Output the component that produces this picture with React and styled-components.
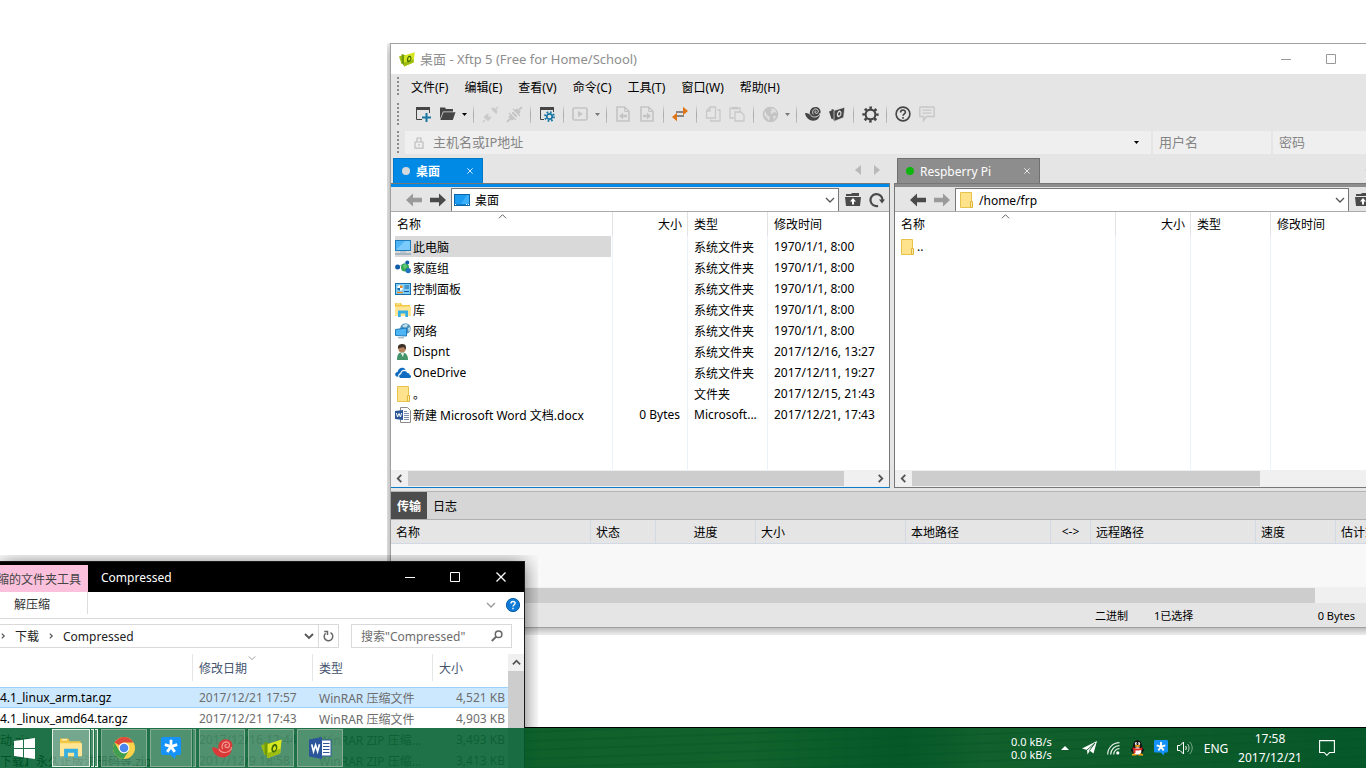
import React from 'react';
import styled, { createGlobalStyle } from 'styled-components';

const GlobalStyle = createGlobalStyle`
  * {
    box-sizing: border-box;
  }
  body {
    margin: 0;
    font-family: "Noto Sans", "Noto Sans CJK SC", sans-serif;
    font-size: 12px;
    color: #000;
  }
  button, input {
    font: inherit;
    color: inherit;
    border: none;
    background: none;
    padding: 0;
    margin: 0;
    outline: none;
    border-radius: 0;
  }
  svg {
    display: block;
    flex: none;
  }
`

/* ---------- desktop ---------- */

const Desktop = styled.main`
  position: relative;
  height: 100vh;
  overflow: hidden;
  background: #fff;
  display: flex;
  flex-direction: column;
  justify-content: flex-end;
`

const Wallpaper = styled.div`
  height: 41px;
  border-top: 1px solid #000;
  background:
    repeating-linear-gradient(178deg, transparent 0 3px, rgba(0, 0, 0, 0.3) 4px 5px, transparent 6px 9px),
    linear-gradient(90deg, #5a4a00, #8a7a20 55%, #302800 66%, #90702a 72%, #704a10 85%, #302010);
`

const XftpWindow = styled.section`
  position: absolute;
  top: 43px;
  left: 390px;
  right: -35px;
  border: 1px solid #a0a0a0;
  background: #e5e5e5;
  box-shadow: 0 1px 12px rgba(0, 0, 0, 0.45);
  clip-path: inset(0 0 -7px -3px);
`

const ExplorerWindow = styled.section`
  position: absolute;
  top: 561px;
  left: 0;
  width: 525px;
  border: 1px solid #1a1a1a;
  border-left: none;
  background: #fff;
  box-shadow: 0 2px 18px rgba(0, 0, 0, 0.55);
  clip-path: inset(-6px -13px 0 0);
`

/* ---------- xftp chrome ---------- */

const TitleBar = styled.header`
  display: flex;
  align-items: center;
  height: 30px;
  padding-left: 8px;
  background: #fff;
  color: #8e8e8e;
`

const Title = styled.h1`
  flex: 1;
  margin: 0;
  padding-left: 5px;
  font-size: 13px;
  line-height: 16px;
  font-weight: 400;
`

const CaptionButton = styled.button`
  display: flex;
  align-items: center;
  justify-content: center;
  width: ${props => props.$wide ? '47px' : '45px'};
  height: 30px;
`

const BarRow = styled.div`
  display: flex;
  align-items: center;
  height: ${props => props.$height}px;
  padding-left: 6px;
`

const Grip = styled.span`
  width: 2px;
  height: ${props => props.$tall ? '23px' : '20px'};
  margin-right: ${props => props.$gap}px;
  background: repeating-linear-gradient(#8c8c8c 0 2px, transparent 2px 4px);
`

const Menu = styled.nav`
  display: flex;
  gap: 16px;
`

const ToolButton = styled.button`
  display: flex;
  align-items: center;
  justify-content: center;
  width: ${props => props.$caret ? '10px' : '24px'};
  height: 24px;
`

const ToolSeparator = styled.span`
  width: 1px;
  height: 18px;
  margin: 0 4px;
  background: linear-gradient(#e0e0e0, #a8a8a8 50%, #c0c0c0);
`

const AddressRow = styled(BarRow)`
  margin-top: 3px;
`

const Field = styled.label`
  display: flex;
  align-items: center;
  height: 23px;
  flex: ${props => props.$grow ? '1' : `0 0 ${props.$width}px`};
  min-width: 0;
  margin-right: 2px;
  padding-left: ${props => props.$grow ? '9px' : '6px'};
  padding-right: ${props => props.$grow ? '3px' : '0'};
  gap: 9px;
  background: #efefef;
  input {
    flex: 1;
    min-width: 0;
    font-size: 13px;
    line-height: 18px;
    padding-bottom: 2px;
  }
  input::placeholder {
    color: #858585;
    opacity: 1;
  }
`

/* ---------- file panes ---------- */

const Panes = styled.div`
  display: flex;
  gap: 4px;
`

const Pane = styled.section`
  flex: ${props => props.$grow} 1 0;
  min-width: 0;
`

const TabRow = styled.div`
  display: flex;
  align-items: flex-end;
  justify-content: space-between;
  height: 29px;
  padding-left: ${props => props.$active ? '2px' : '3px'};
`

const Tab = styled.button`
  display: flex;
  align-items: center;
  width: ${props => props.$width}px;
  height: 25px;
  padding: 0 9px 0 8px;
  gap: 6px;
  color: #fff;
  font-weight: ${props => props.$active ? 700 : 400};
  border: 1px solid ${props => props.$active ? '#0478c4' : '#707070'};
  border-bottom: none;
  background: ${props => props.$active ? '#008ae6' : '#8d8d8d'};
  svg:last-child {
    margin-left: auto;
  }
`

const Dot = styled.span`
  width: 8px;
  height: 8px;
  border-radius: 50%;
  background: ${props => props.$color};
`

const TabArrows = styled.span`
  display: flex;
  gap: 13px;
  padding: 0 10px 8px 0;
`

const PaneBody = styled.div`
  border: 1px solid #777;
  border-left-color: ${props => props.$active ? '#e5e5e5' : '#777'};
  border-left-width: ${props => props.$active ? '0' : '1px'};
  border-bottom-color: ${props => props.$active ? '#0b7bc8' : '#777'};
  background: #fff;
`

const Band = styled.div`
  height: 3px;
  background: ${props => props.$active ? '#008ae6' : '#8d8d8d'};
`

const PathBar = styled.div`
  display: flex;
  align-items: flex-end;
  height: 25px;
  background: #e5e5e5;
  border-bottom: 1px solid #aaa;
`

const PathButton = styled.button`
  display: flex;
  align-items: center;
  justify-content: center;
  width: 24px;
  height: 23px;
`

const PathNav = styled.div`
  display: flex;
  padding-left: 11px;
  width: 60px;
`

const PathBox = styled.label`
  flex: 1;
  display: flex;
  align-items: center;
  min-width: 0;
  height: 23px;
  padding: 0 3px 0 2px;
  gap: 5px;
  border: 1px solid #777;
  border-bottom: none;
  background: #fff;
  input {
    flex: 1;
    min-width: 0;
  }
`

const PathActions = styled.div`
  display: flex;
  padding-left: 2px;
`

const ListBox = styled.div`
  height: 258px;
`

const FileTable = styled.table`
  width: 100%;
  height: 100%;
  table-layout: fixed;
  border-collapse: separate;
  border-spacing: 0;
  th, td {
    padding: 0 6px;
    font-weight: 400;
    text-align: left;
    white-space: nowrap;
    overflow: hidden;
    border-right: 1px solid #ebf2fb;
  }
  th {
    height: 24px;
    border-right-color: #e2e2e2;
  }
  td {
    height: 21px;
  }
  th:last-child, td:last-child {
    border-right: none;
  }
  th:nth-child(2) {
    text-align: right;
    padding-right: 5px;
  }
  td:nth-child(2) {
    text-align: right;
    padding-right: 7px;
  }
  td:first-child {
    padding: 0 1px 0 4px;
  }
`

const NameHead = styled.div`
  display: flex;
  align-items: center;
  justify-content: space-between;
  height: 24px;
  svg {
    align-self: flex-start;
    margin-right: 99px;
  }
`

const FileName = styled.div`
  display: flex;
  align-items: center;
  height: 21px;
  gap: 2px;
  background: ${props => props.$selected ? '#d9d9d9' : 'transparent'};
`

const FillRow = styled.tr`
  td {
    height: auto;
  }
`

const Scroll = styled.div`
  display: flex;
  align-items: center;
  height: ${props => props.$height || 17}px;
  background: #f0f0f0;
`

const ScrollButton = styled.button`
  display: flex;
  align-items: center;
  justify-content: center;
  width: 17px;
  height: 17px;
`

const ScrollTrack = styled.div`
  flex: 1;
`

const ScrollThumb = styled.div`
  width: ${props => props.$size}%;
  height: 15px;
  background: #cdcdcd;
`

/* ---------- transfer panel ---------- */

const Transfers = styled.section`
  margin-top: 3px;
  border-top: 1px solid #b4b4b4;
`

const TransferTabs = styled.div`
  display: flex;
  height: 28px;
  background: #d6d6d6;
  border-bottom: 1px solid #b0b0b0;
`

const TransferTab = styled.button`
  padding: 0 6px;
  color: ${props => props.$active ? '#fff' : '#000'};
  background: ${props => props.$active ? '#4d4d4d' : 'transparent'};
  font-weight: ${props => props.$active ? 700 : 400};
`

const TransferTable = styled.table`
  width: 100%;
  table-layout: fixed;
  border-spacing: 0;
  th {
    height: 24px;
    padding: 0 5px;
    font-weight: 400;
    text-align: left;
    white-space: nowrap;
    overflow: hidden;
    border-right: 1px solid #d2d8e4;
    border-bottom: 1px solid #d2d8e4;
  }
  th:nth-child(3), th:nth-child(6) {
    text-align: center;
  }
`

const TransferBody = styled.div`
  height: 43px;
  background: #f8f8f8;
`

const StatusBar = styled.footer`
  display: flex;
  align-items: center;
  justify-content: flex-end;
  height: 24px;
  padding-right: 45px;
  font-size: 11px;
`

const StatusItem = styled.span`
  width: ${props => props.$width}px;
  text-align: ${props => props.$end ? 'right' : 'left'};
`

/* ---------- explorer ---------- */

const ExplorerTitle = styled.header`
  display: flex;
  align-items: center;
  height: 30px;
  background: #000;
  color: #fff;
`

const ToolsTab = styled.span`
  display: flex;
  justify-content: flex-end;
  align-items: center;
  align-self: flex-end;
  width: 88px;
  height: 27px;
  padding-right: 7px;
  overflow: hidden;
  white-space: nowrap;
  color: #444;
  background: #fbc1dc;
`

const ExplorerName = styled.h2`
  flex: 1;
  margin: 0;
  padding-left: 13px;
  font-size: 12px;
  font-weight: 400;
`

const Ribbon = styled.div`
  display: flex;
  align-items: center;
  justify-content: space-between;
  height: 27px;
  padding-right: 4px;
  border-bottom: 1px solid #d9dadb;
`

const RibbonTab = styled.button`
  align-self: flex-start;
  width: 88px;
  height: 22px;
  padding: 4px 0 0 14px;
  text-align: left;
  line-height: 16px;
  color: #333;
  border-right: 1px solid #dcdcdc;
`

const RibbonTools = styled.div`
  display: flex;
  align-items: center;
  gap: 10px;
`

const Location = styled.div`
  display: flex;
  padding: 5px 12px 6px 0;
  gap: 12px;
`

const Crumbs = styled.div`
  flex: 1;
  display: flex;
  align-items: center;
  height: 24px;
  border: 1px solid #d9d9d9;
  border-left: none;
  gap: 9px;
  color: #222;
`

const CrumbSpacer = styled.span`
  flex: 1;
`

const Refresh = styled.button`
  display: flex;
  align-items: center;
  justify-content: center;
  width: 20px;
  height: 22px;
  border-left: 1px solid #d9d9d9;
  margin-left: -5px;
`

const Search = styled.label`
  display: flex;
  align-items: center;
  width: 161px;
  height: 24px;
  padding: 0 8px 0 9px;
  border: 1px solid #d9d9d9;
  input {
    flex: 1;
    min-width: 0;
  }
  input::placeholder {
    color: #6d6d6d;
    opacity: 1;
  }
`

const ExplorerList = styled.div`
  display: flex;
  height: 118px;
`

const ExplorerTable = styled.table`
  flex: 1;
  table-layout: fixed;
  border-spacing: 0;
  align-self: flex-start;
  width: 0;
  color: #6d6d6d;
  th {
    height: 27px;
    padding: 0 6px;
    font-weight: 400;
    text-align: left;
    color: #44546f;
    border-right: 1px solid #e5e5e5;
  }
  th:last-child {
    border-right: none;
  }
  thead::after {
    content: "";
    display: block;
    height: 6px;
  }
  td {
    height: 21px;
    padding: 0 6px;
    white-space: nowrap;
    overflow: hidden;
  }
  td:first-child {
    padding-left: 0;
    color: #000;
  }
  td:last-child {
    text-align: right;
    padding: 0 3px 0 0;
  }
`

const ExplorerRow = styled.tr`
  td {
    background: ${props => props.$selected ? '#cce8ff' : 'transparent'};
    border: 0 solid #99d1ff;
    border-width: ${props => props.$selected ? '1px 0' : '0'};
  }
`

const SortHead = styled.div`
  display: flex;
  align-items: center;
  height: 27px;
  gap: 1px;
  svg {
    align-self: flex-start;
  }
`

const VerticalScroll = styled.div`
  display: flex;
  flex-direction: column;
  width: 16px;
  background: #f0f0f0;
`

const VerticalThumb = styled.div`
  flex: 1;
  background: #cdcdcd;
`

/* ---------- taskbar ---------- */

const Taskbar = styled.footer`
  position: absolute;
  left: 0;
  right: 0;
  bottom: 0;
  height: 40px;
  display: flex;
  justify-content: space-between;
  color: #fff;
  background: rgba(0, 95, 45, 0.88);
`

const Apps = styled.div`
  display: flex;
  align-items: center;
  gap: 3px;
`

const StartButton = styled.button`
  display: flex;
  align-items: center;
  justify-content: center;
  width: 49px;
  height: 40px;
`

const AppGroup = styled.div`
  display: flex;
  gap: 1px;
`

const AppButton = styled.button`
  display: flex;
  align-items: center;
  justify-content: center;
  width: ${props => 46 - (props.$stack || 0) * 4}px;
  height: 38px;
  border: 1px solid ${props => props.$active ? '#e4efe8' : '#86ad98'};
  background: rgba(255, 255, 255, ${props => props.$active ? 0.38 : 0.22});
`

const StackEdge = styled.span`
  width: 3px;
  height: 38px;
  border: 1px solid ${props => props.$active ? '#e4efe8' : '#86ad98'};
  border-left: none;
  background: rgba(255, 255, 255, 0.2);
`

const Tray = styled.div`
  display: flex;
  align-items: center;
  padding-right: 27px;
`

const TrayButton = styled.button`
  display: flex;
  align-items: center;
  justify-content: center;
  width: 24px;
  height: 40px;
`

const NetSpeed = styled.div`
  width: 42px;
  font-size: 11px;
  line-height: 13px;
  white-space: nowrap;
`

const Language = styled.button`
  margin-left: 5px;
  width: 28px;
`

const Clock = styled.time`
  width: 80px;
  text-align: center;
  line-height: 19px;
  margin-right: 5px;
`

/* ---------- icons ---------- */

const XftpLogo = ({ size = 16, mono }) => {
  const c = mono ? ['#454545', '#454545', '#454545', '#e5e5e5'] : ['#d6e620', '#9cbc10', '#6f9a0a', '#3f6a08'];
  return (
    <svg width={size} height={size} viewBox="0 0 16 16">
      <path d="M0 5.5 L3 4.5 L3.4 13 L2.6 13 Z" fill={c[1]} />
      <path d="M2.6 3 L6.4 4.2 L5.5 15.2 L2.8 12 Z" fill={c[2]} />
      <path d="M5 4.5 L15.8 1.2 L14.6 11.6 L5 15.4 Z" fill={c[0]} stroke={mono ? c[3] : 'none'} strokeWidth=".7" />
      {!mono && <path d="M5 11.5 L14.9 8.2 L14.6 11.6 L5 15.4 Z" fill={c[1]} />}
      <path d="M10.6 4.4 C7.4 5.4 7 10.6 9.5 11.2 C12.7 10.6 13.7 5 10.6 4.4 Z" fill={c[3]} />
      <path d="M10.5 6 C8.9 6.8 8.7 9.3 9.8 9.8 C11.5 9.3 12.1 6.4 10.5 6 Z" fill={c[0]} />
    </svg>
  );
}

const Snail = ({ size = 16, color = '#454545', light = '#e5e5e5' }) => (
  <svg width={size} height={size} viewBox="0 0 16 16">
    <path d="M0 7.6 C1.5 6.2 3.4 8.2 5 8.4 C4.2 4.2 6.6 .9 10.4 .9 C13.6 .9 15.6 3 15.6 5.8 C15.6 7 15.2 7.8 14.8 8.6 C14.8 12.2 12 14.8 8.4 14.8 C4.2 14.8 1 11.8 0 7.6 Z" fill={color} />
    <path d="M5.2 8.4 C6.4 11.2 10.4 11.8 13 10 C14.2 9.2 14.8 8.2 14.9 7" stroke={light} strokeWidth=".9" fill="none" />
    <path d="M8.2 8.4 C6.8 5.8 8.2 3 10.6 2.9 C12.9 2.9 13.9 4.8 13.1 6.4 C12.3 7.9 9.9 7.6 9.8 6 C9.8 5 10.9 4.6 11.4 5.4" stroke={light} strokeWidth=".9" fill="none" />
  </svg>
)

const Caret = ({ color = '#000' }) => (
  <svg width="5" height="3" viewBox="0 0 5 3"><path d="M0 0H5L2.5 3Z" fill={color} /></svg>
)

const Chevron = ({ dir = 'down', color = '#555', size = 10, weight = 1.3 }) => {
  const turn = { down: 0, up: 180, left: 90, right: -90 };
  return (
    <svg width={size} height={size} viewBox="0 0 10 10">
      <path d="M1 3L5 7L9 3" fill="none" stroke={color} strokeWidth={weight} transform={`rotate(${turn[dir]} 5 5)`} />
    </svg>
  );
}

const Cross = ({ size = 6, color = '#fff' }) => (
  <svg width={size} height={size} viewBox="0 0 10 10"><path d="M.5 .5L9.5 9.5M9.5 .5L.5 9.5" stroke={color} strokeWidth="1.3" /></svg>
)

const Minimize = ({ color }) => (
  <svg width="10" height="10" viewBox="0 0 10 10"><path d="M0 5.5H10" stroke={color} /></svg>
)

const Maximize = ({ color }) => (
  <svg width="10" height="10" viewBox="0 0 10 10"><path d="M.5 .5H9.5V9.5H.5Z" fill="none" stroke={color} /></svg>
)

const NewSession = () => (
  <svg width="16" height="16" viewBox="0 0 16 16">
    <path d="M1.5 1V13.5H7M14.5 1V7" stroke="#454545" fill="none" />
    <path d="M1 1H15V4H1Z" fill="#454545" />
    <path d="M7 11.5H16M11.5 7V16" stroke="#1976a3" strokeWidth="2" />
  </svg>
)

const SessionSettings = () => (
  <svg width="16" height="16" viewBox="0 0 16 16">
    <path d="M1.5 1V13.5H5M14.5 1V6" stroke="#454545" fill="none" />
    <path d="M1 1H15V4H1Z" fill="#454545" />
    <circle cx="10.5" cy="10.5" r="4.4" fill="none" stroke="#1976a3" strokeWidth="2" strokeDasharray="1.7 1.75" />
    <circle cx="10.5" cy="10.5" r="2.7" fill="none" stroke="#1976a3" strokeWidth="1.7" />
  </svg>
)

const OpenFolder = () => (
  <svg width="17" height="16" viewBox="0 0 17 16">
    <path d="M1 1.5H6L7 3H14V5.5H4L1 13Z" fill="#454545" />
    <path d="M4.5 6.3H16.5L13.8 14H1.3Z" fill="#454545" />
  </svg>
)

const Plug = ({ joined }) => (
  <svg width="17" height="17" viewBox="0 0 17 17">
    {joined
      ? <g stroke="#c6c6c6" fill="#c6c6c6">
        <path d="M1 16L4 13M16 1L13 4" strokeWidth="1.8" />
        <path d="M4.5 8.5L8.5 12.5L5.5 14L3 11.5ZM8.5 4.5L12.5 8.5L14 5.5L11.5 3ZM6 7L10 11L11 10L7 6Z" />
        <path d="M3 7L10 14M7 3L14 10" strokeWidth="1.2" />
      </g>
      : <g stroke="#c9c9c9" strokeWidth="1.2" fill="#c9c9c9">
        <path d="M.8 16.2L3 14M2.5 11L6 14.5L8 12.5L4.5 9ZM6.5 8L5.3 9.2M9 10.5L7.8 11.7" />
        <path d="M16.2 .8L14 3M10.5 3.5L13.5 6.5L14.8 5L12 2.2ZM9.5 2L15 7.5" />
      </g>}
  </svg>
)

const PlayBox = () => (
  <svg width="16" height="16" viewBox="0 0 16 16">
    <rect x="1" y="2" width="14" height="12" rx="1.5" fill="none" stroke="#c4c4c4" strokeWidth="1.7" />
    <path d="M6 5L11 8L6 11Z" fill="#c4c4c4" />
  </svg>
)

const PageArrow = ({ back }) => (
  <svg width="14" height="16" viewBox="0 0 14 16">
    <path d="M1 1H8.5L13 5.5V15H1Z" fill="none" stroke="#c4c4c4" strokeWidth="1.6" />
    <path d="M8.5 1V5.5H13" fill="none" stroke="#c4c4c4" />
    <path d="M3 10L7 6.5V8.8H11V11.2H7V13.5Z" fill="#c4c4c4" transform={back ? '' : 'rotate(180 7 10)'} />
  </svg>
)

const Swap = () => (
  <svg width="16" height="16" viewBox="0 0 16 16">
    <path d="M4 6H11M5 10H12" stroke="#686868" strokeWidth="1.7" />
    <path d="M11 .8L16 5L11 9.2Z M5 6.8L0 11L5 15.2Z" fill="#df7514" />
  </svg>
)

const CopyPages = ({ paste }) => (
  <svg width="16" height="16" viewBox="0 0 16 16" fill="none" stroke="#c8c8c8" strokeWidth="1.3">
    {paste
      ? <><path d="M1 2H11V6M1 2V12H5" /><path d="M3 2.2H9" strokeWidth="2.6" /><path d="M6 6H12L15 9V15H6Z" /></>
      : <><path d="M5 1H10.5V12H1.5V5Z M5 1V5H1.5" /><path d="M12.5 4H15V15H5.5V13.5" /></>}
  </svg>
)

const Globe = () => (
  <svg width="17" height="17" viewBox="0 0 17 17">
    <circle cx="8.5" cy="8.5" r="7.8" fill="#c4c4c4" />
    <path d="M8 2L13 3L15 7L12 6L10 8L8 6L10 4Z M3 5L5 9L8 11L7 15L5 12L2 9Z M11 10L14 10L12 14Z" fill="#dedede" />
  </svg>
)

const Gear = () => (
  <svg width="17" height="17" viewBox="0 0 17 17">
    <circle cx="8.5" cy="8.5" r="6.7" fill="none" stroke="#454545" strokeWidth="2.8" strokeDasharray="2.5 2.76" strokeDashoffset="1.25" />
    <circle cx="8.5" cy="8.5" r="4.9" fill="none" stroke="#454545" strokeWidth="2.1" />
  </svg>
)

const HelpRing = () => (
  <svg width="16" height="16" viewBox="0 0 16 16" fill="none" stroke="#454545">
    <circle cx="8" cy="8" r="6.9" strokeWidth="1.6" />
    <path d="M5.6 6.4C5.6 3.2 10.4 3.3 10.4 6.2C10.4 7.8 8 7.8 8 9.8M8 11V12.7" strokeWidth="1.6" />
  </svg>
)

const Chat = () => (
  <svg width="16" height="16" viewBox="0 0 16 16" fill="none" stroke="#c6c6c6" strokeWidth="1.3">
    <path d="M1.5 1H14.5Q15.2 1 15.2 2V10.5H7.5L4.5 14.5V10.5H.8V2Q.8 1 1.5 1ZM3.5 4.2H12.5M3.5 7.2H12.5" />
  </svg>
)

const Lock = () => (
  <svg width="10" height="12" viewBox="0 0 10 12" fill="none" stroke="#bdbdbd">
    <path d="M1 5H9V11.2H1ZM3 5V1H7V5M5 7V9" strokeWidth="1.2" />
  </svg>
)

const Arrow = ({ right, color }) => (
  <svg width="16" height="14" viewBox="0 0 16 14">
    <path d="M0 7L7 .5V4.8H16V9.2H7V13.5Z" fill={color} transform={right ? 'rotate(180 8 7)' : ''} />
  </svg>
)

const Triangle = ({ right }) => (
  <svg width="6" height="10" viewBox="0 0 6 10">
    <path d="M6 0V10L0 5Z" fill="#b9b9b9" transform={right ? 'rotate(180 3 5)' : ''} />
  </svg>
)

const UpFolder = () => (
  <svg width="16" height="14" viewBox="0 0 16 14">
    <path d="M1 3V1H6L7 0H14V3Z M0 4H16L15 13H1Z" fill="#4a4a4a" />
    <path d="M8 5L11 8.5H9V11.5H7V8.5H5Z" fill="#fff" />
  </svg>
)

const Reload = () => (
  <svg width="16" height="16" viewBox="0 0 16 16">
    <path d="M9 13.9A6 6 0 1 1 13.5 8" fill="none" stroke="#4a4a4a" strokeWidth="2.2" />
    <path d="M10 7.5H16L13 11.5Z" fill="#4a4a4a" />
  </svg>
)

const DesktopIcon = () => (
  <svg width="16" height="12" viewBox="0 0 16 12">
    <rect x=".5" y=".5" width="15" height="11" fill="#1c9cf0" stroke="#0a66a8" />
    <path d="M7 10L13 1H15V10Z" fill="#3cb0fa" />
    <path d="M1 10.5H15" stroke="#0f7fd0" />
    <path d="M1 10.5H2M12 10.5H13M14 10.5H15" stroke="#fff" />
  </svg>
)

const Folder = () => (
  <svg width="16" height="16" viewBox="0 0 16 16">
    <path d="M2.5 .5H13.5V15.5H2.5Z" fill="#ffe38c" stroke="#e8c34a" />
    <path d="M12.5 9.5H14.5V15.5H12.5Z" fill="#ffe9a4" stroke="#e0b63a" />
  </svg>
)

const Computer = () => (
  <svg width="16" height="16" viewBox="0 0 16 16">
    <rect x=".5" y="1.5" width="15" height="10" fill="#4fb4f4" stroke="#1f7cba" />
    <path d="M1 11L10 2H15V11Z" fill="#7acbfb" />
    <path d="M5 13H11" stroke="#9bb4c6" />
    <path d="M0 15H16" stroke="#7790a5" />
  </svg>
)

const HomeGroup = () => (
  <svg width="16" height="16" viewBox="0 0 16 16">
    <path d="M3 7L12 2M9 7L13 11" stroke="#9ac3de" />
    <circle cx="10" cy="7.5" r="4" fill="#35a853" />
    <path d="M8 5L11 4L12 7L9 9Z" fill="#63c877" />
    <circle cx="2.6" cy="7" r="2.5" fill="#125ca8" />
    <circle cx="12.3" cy="2.4" r="2" fill="#125ca8" />
    <circle cx="13.2" cy="10.6" r="2.7" fill="#2273bd" />
  </svg>
)

const ControlPanel = () => (
  <svg width="16" height="12" viewBox="0 0 16 12">
    <rect x=".5" y=".5" width="15" height="11" fill="#7fcdf8" stroke="#1670ac" />
    <circle cx="5" cy="5" r="2.8" fill="#fff" />
    <path d="M5 5V2.2A2.8 2.8 0 0 1 7.8 5Z" fill="#ef8a20" />
    <path d="M5 5H2.2A2.8 2.8 0 0 0 5 7.8Z" fill="#1670ac" />
    <path d="M9.5 3H14M9.5 5H14M9 8.5H14" stroke="#0c5b96" />
    <path d="M2 9.5H8" stroke="#ef8a20" strokeWidth="1.4" />
  </svg>
)

const Library = ({ size = 16 }) => (
  <svg width={size} height={size} viewBox="0 0 16 16">
    <path d="M0 1H6L7 3H15V14H0Z" fill="#f2c744" />
    <path d="M0 4.5H16V14H0Z" fill="#ffe594" />
    <path d="M1.5 2H5" stroke="#fff3c4" />
    <path d="M3 15V8.5H13V15H10.3V11.5H5.7V15Z" fill="#35aee2" />
  </svg>
)

const Network = () => (
  <svg width="16" height="16" viewBox="0 0 16 16">
    <circle cx="10.5" cy="5.5" r="5.3" fill="#4d8fb8" />
    <path d="M7 2C9 3 9 1 11 .6L13 2L11 5L8 4ZM13 5L15.5 4V7L13.5 9Z" fill="#b9dcea" />
    <path d="M.5 6.5L11.5 5V13L.5 12.5Z" fill="#4fb6f6" stroke="#1f7cba" />
    <path d="M3 14.8H9" stroke="#8aa3b5" />
  </svg>
)

const Person = () => (
  <svg width="16" height="16" viewBox="0 0 16 16">
    <path d="M2 16C2 10 4 8.5 7 8.5C11 8.5 13 11 13 16Z" fill="#44946b" />
    <path d="M5.5 8.5L8 13L9 9Z" fill="#e8f2ec" />
    <circle cx="7" cy="4.8" r="3.7" fill="#b5825c" />
    <path d="M3 5C2.5 .5 5 0 7.5 0C11 .2 11.3 2.5 10.8 5.5C9.5 5 9.5 3.5 8.5 3C6.5 4 4.5 3 3 5Z" fill="#3a3029" />
  </svg>
)

const OneDrive = () => (
  <svg width="16" height="12" viewBox="0 0 16 12">
    <path d="M1.5 9.5C-1 8 .3 4.8 2.6 5C3 1 8.2-.8 10.7 2.8C7.5 2 5.2 4.5 5.2 6.2C3.3 6.5 3 8.5 3.4 9.7Z" fill="#0f6cc0" />
    <path d="M6 11C3.5 11 3.6 7.3 6.2 7.2C6.3 3.6 11.2 2.8 12.3 6.1C14 5.9 14.6 7 14.5 7.8C16.8 8.2 16.4 11 14.6 11Z" fill="#0f6cc0" />
  </svg>
)

const WordDoc = ({ size = 16 }) => (
  <svg width={size} height={size} viewBox="0 0 16 16">
    <path d="M5.5 .5H12.5L15.5 3.5V15.5H5.5Z" fill="#fff" stroke="#8a8a8a" />
    <path d="M9 4.5H12M9 6.5H14M9 8.5H14M9 10.5H14M9 12.5H14" stroke="#7d8fae" />
    <path d="M0 4L8 3V13L0 12Z" fill="#2b579a" />
    <path d="M1.3 6L2.6 10L4 6.4L5.4 10L6.7 6" stroke="#fff" strokeWidth="1" fill="none" />
  </svg>
)

const WordApp = () => (
  <svg width="23" height="22" viewBox="0 0 23 22">
    <path d="M12 3H22V19H12Z" fill="#fff" stroke="#2b579a" />
    <path d="M14 6.5H20.5M14 9.5H20.5M14 12.5H20.5M14 15.5H20.5" stroke="#2b579a" strokeWidth="1.2" />
    <path d="M0 2.5L13 0V22L0 19.5Z" fill="#2b579a" />
    <path d="M2.7 7.4L4.5 14.4L6.6 8L8.6 14.4L10.5 7.2" stroke="#fff" strokeWidth="1.7" fill="none" />
  </svg>
)

const Chrome = () => (
  <svg width="22" height="22" viewBox="0 0 22 22">
    <circle cx="11" cy="11" r="11" fill="#fcd24b" />
    <path d="M11 11L1.5 5.5A11 11 0 0 1 20.5 5.5H11Z" fill="#de4a3a" />
    <path d="M1.5 5.5A11 11 0 0 0 10.5 22L15.8 13.8L11 11L6.2 13.8Z" fill="#3f9e4f" />
    <circle cx="11" cy="11" r="5.4" fill="#fff" />
    <circle cx="11" cy="11" r="4.3" fill="#4a86ee" />
  </svg>
)

const StarBubble = ({ size = 20 }) => (
  <svg width={size} height={size * 1.1} viewBox="0 0 20 22">
    <path d="M2 0H18Q20 0 20 2V16Q20 18 18 18H15L14 22L9.5 18H2Q0 18 0 16V2Q0 0 2 0Z" fill="#1593fb" />
    <path d="M10 2.8V9.6M10 9.6L3.8 7.6M10 9.6L16.2 7.6M10 9.6L6.2 14.9M10 9.6L13.8 14.9" stroke="#fff" strokeWidth="2.7" />
  </svg>
)

const WindowsLogo = () => (
  <svg width="21" height="21" viewBox="0 0 21 21">
    <path d="M0 3L9 1.7V10H0ZM10 1.5L21 0V10H10ZM0 11H9V19.3L0 18ZM10 11H21V21L10 19.5Z" fill="#fff" />
  </svg>
)

const HelpDot = () => (
  <svg width="14" height="14" viewBox="0 0 14 14">
    <circle cx="7" cy="7" r="6.6" fill="#0f7bd6" stroke="#0a5eaa" />
    <path d="M5 5.5C5 2.8 9.1 2.8 9.1 5.3C9.1 6.8 7 6.8 7 8.6M7 9.8V11.2" stroke="#fff" strokeWidth="1.4" fill="none" />
  </svg>
)

const SmallReload = () => (
  <svg width="11" height="12" viewBox="0 0 11 12" fill="none" stroke="#666" strokeWidth="1.5">
    <path d="M7.5 2.6A4.3 4.3 0 1 1 2.6 3.2M1.2 1.5H4.5V5" />
  </svg>
)

const Magnifier = () => (
  <svg width="12" height="12" viewBox="0 0 12 12" fill="none" stroke="#666">
    <circle cx="7.6" cy="4.2" r="3.3" strokeWidth="1.5" />
    <path d="M5.2 6.6L.8 11" strokeWidth="1.9" />
  </svg>
)

const PaperPlane = () => (
  <svg width="15" height="14" viewBox="0 0 15 14">
    <path d="M0 7.5L15 0L11.5 12.5L7.8 9.8L5.5 13.5L5 9Z" fill="#fff" />
    <path d="M5 9L13 2L7.4 9.7" fill="none" stroke="#256a3d" />
  </svg>
)

const Wifi = () => (
  <svg width="13" height="13" viewBox="0 0 13 13" fill="none" stroke="#e3eee7" strokeWidth="1.2">
    <path d="M.7 12.5C.7 6 6 .7 12.5 .7M3.7 12.5C3.7 7.6 7.6 3.7 12.5 3.7M6.7 12.5C6.7 9.2 9.2 6.7 12.5 6.7" />
    <circle cx="10.8" cy="10.9" r="1.6" fill="#fff" stroke="none" />
  </svg>
)

const Penguin = () => (
  <svg width="15" height="16" viewBox="0 0 15 16">
    <path d="M1 11C1 8 3 8 3.2 5C3.4-1.5 11.6-1.5 11.8 5C12 8 14 8 14 11L12.8 11.8C13 14 11 15 7.5 15C4 15 2 14 2.2 11.8Z" fill="#111" />
    <ellipse cx="7.5" cy="11" rx="3.9" ry="3.8" fill="#fff" />
    <ellipse cx="6" cy="3.6" rx="1.1" ry="1.5" fill="#fff" />
    <ellipse cx="9" cy="3.6" rx="1.1" ry="1.5" fill="#fff" />
    <circle cx="6.3" cy="3.8" r=".5" />
    <circle cx="8.7" cy="3.8" r=".5" />
    <ellipse cx="7.5" cy="6" rx="2.8" ry="1" fill="#f6a51b" />
    <path d="M2.8 7.3C5.5 9 9.5 9 12.2 7.3L12.5 9.2C9.5 10.8 6.8 10.7 5.5 10.3V13H3.8V9.8L2.5 9.2Z" fill="#e02a22" />
    <path d="M2 14.2C3.5 13 6 13.5 6.8 15.5H1.8ZM13 14.2C11.5 13 9 13.5 8.2 15.5H13.2Z" fill="#f6a51b" />
  </svg>
)

const Speaker = () => (
  <svg width="16" height="14" viewBox="0 0 16 14" fill="none" stroke="#fff">
    <path d="M.5 4.5H3L6.5 1V13L3 9.5H.5Z" />
    <path d="M8.5 5C9.5 6 9.5 8 8.5 9" />
    <path d="M10.5 3C12.5 5 12.5 9 10.5 11" stroke="#bcd3c5" />
    <path d="M12.7 1C16 4 16 10 12.7 13" stroke="#7fa98f" />
  </svg>
)

const Notification = () => (
  <svg width="16" height="16" viewBox="0 0 16 16" fill="none" stroke="#fff" strokeWidth="1.1">
    <path d="M.6 .6H15.4V12.5H10.5L7.8 15.3L5.2 12.5H.6Z" />
  </svg>
)

/* ---------- data ---------- */

const menus = ['文件(F)', '编辑(E)', '查看(V)', '命令(C)', '工具(T)', '窗口(W)', '帮助(H)'];

const tools = [
  ['新建', <NewSession />], ['打开', <OpenFolder />], ['caret', <Caret />], null,
  ['连接', <Plug />], ['断开', <Plug joined />], null,
  ['属性', <SessionSettings />], null,
  ['运行', <PlayBox />], ['caret', <Caret color="#777" />], null,
  ['左移', <PageArrow back />], ['右移', <PageArrow />], null,
  ['传输', <Swap />], null,
  ['复制', <CopyPages />], ['粘贴', <CopyPages paste />], null,
  ['编码', <Globe />], ['caret', <Caret color="#777" />], null,
  ['Xshell', <Snail />], ['Xftp', <XftpLogo mono />], null,
  ['选项', <Gear />], null,
  ['帮助', <HelpRing />], ['反馈', <Chat />],
];

const localFiles = [
  { icon: <Computer />, name: '此电脑', type: '系统文件夹', date: '1970/1/1, 8:00', selected: true },
  { icon: <HomeGroup />, name: '家庭组', type: '系统文件夹', date: '1970/1/1, 8:00' },
  { icon: <ControlPanel />, name: '控制面板', type: '系统文件夹', date: '1970/1/1, 8:00' },
  { icon: <Library />, name: '库', type: '系统文件夹', date: '1970/1/1, 8:00' },
  { icon: <Network />, name: '网络', type: '系统文件夹', date: '1970/1/1, 8:00' },
  { icon: <Person />, name: 'Dispnt', type: '系统文件夹', date: '2017/12/16, 13:27' },
  { icon: <OneDrive />, name: 'OneDrive', type: '系统文件夹', date: '2017/12/11, 19:27' },
  { icon: <Folder />, name: '。', type: '文件夹', date: '2017/12/15, 21:43' },
  { icon: <WordDoc />, name: '新建 Microsoft Word 文档.docx', size: '0 Bytes', type: 'Microsoft...', date: '2017/12/21, 17:43' },
];

const remoteFiles = [{ icon: <Folder />, name: '..' }];

const transferColumns = [
  ['名称', 200], ['状态', 65], ['进度', 100], ['大小', 150], ['本地路径', 145],
  ['<->', 40], ['远程路径', 165], ['速度', 80], ['估计剩余时间'],
];

const archives = [
  ['4.1_linux_arm.tar.gz', '2017/12/21 17:57', 'WinRAR 压缩文件', '4,521 KB'],
  ['4.1_linux_amd64.tar.gz', '2017/12/21 17:43', 'WinRAR 压缩文件', '4,903 KB'],
  ['动.zip', '2017/12/16 12:44', 'WinRAR ZIP 压缩...', '3,493 KB'],
  ['下载】永久正版注册码等.zip', '2017/12/9 18:58', 'WinRAR ZIP 压缩...', '3,413 KB'],
];

/* ---------- components ---------- */

const FileList = ({ files, nameWidth }) => (
  <ListBox>
    <FileTable>
      <colgroup>
        <col width={nameWidth} />
        <col width="75" />
        <col width="80" />
        <col />
      </colgroup>
      <thead>
        <tr>
          <th><NameHead>名称 <Chevron dir="up" size={9} weight={1} /></NameHead></th>
          <th>大小</th>
          <th>类型</th>
          <th>修改时间</th>
        </tr>
      </thead>
      <tbody>
        {files.map(file => (
          <tr key={file.name}>
            <td><FileName $selected={file.selected}>{file.icon}{file.name}</FileName></td>
            <td>{file.size}</td>
            <td>{file.type}</td>
            <td>{file.date}</td>
          </tr>
        ))}
        <FillRow><td /><td /><td /><td /></FillRow>
      </tbody>
    </FileTable>
  </ListBox>
)

const FilePane = ({ active, grow, tab, tabWidth, dot, path, icon, files, thumb }) => (
  <Pane $grow={grow}>
    <TabRow $active={active}>
      <Tab $active={active} $width={tabWidth}>
        <Dot $color={dot} />{tab}<Cross />
      </Tab>
      <TabArrows><Triangle /><Triangle right /></TabArrows>
    </TabRow>
    <PaneBody $active={active}>
      <Band $active={active} />
      <PathBar>
        <PathNav>
          <PathButton aria-label="后退"><Arrow color={active ? '#9a9a9a' : '#4a4a4a'} /></PathButton>
          <PathButton aria-label="前进"><Arrow right color={active ? '#4a4a4a' : '#9a9a9a'} /></PathButton>
        </PathNav>
        <PathBox>
          {icon}
          <input aria-label="路径" defaultValue={path} />
          <Chevron />
        </PathBox>
        <PathActions>
          <PathButton aria-label="上一级"><UpFolder /></PathButton>
          <PathButton aria-label="刷新"><Reload /></PathButton>
        </PathActions>
      </PathBar>
      <FileList files={files} nameWidth={active ? 222 : 221} />
      <Scroll>
        <ScrollButton aria-label="向左"><Chevron dir="left" size={9} weight={2} /></ScrollButton>
        <ScrollTrack><ScrollThumb $size={thumb} /></ScrollTrack>
        <ScrollButton aria-label="向右"><Chevron dir="right" size={9} weight={2} /></ScrollButton>
      </Scroll>
    </PaneBody>
  </Pane>
)

const Xftp = () => (
  <XftpWindow>
    <TitleBar>
      <XftpLogo />
      <Title>桌面 - Xftp 5 (Free for Home/School)</Title>
      <CaptionButton aria-label="最小化"><Minimize color="#999" /></CaptionButton>
      <CaptionButton aria-label="最大化"><Maximize color="#999" /></CaptionButton>
      <CaptionButton $wide aria-label="关闭"><Cross size={10} color="#999" /></CaptionButton>
    </TitleBar>
    <BarRow $height={26}>
      <Grip $gap={12} />
      <Menu>{menus.map(menu => <button key={menu}>{menu}</button>)}</Menu>
    </BarRow>
    <BarRow $height={28}>
      <Grip $tall $gap={12} />
      {tools.map((tool, i) => tool
        ? <ToolButton key={i} $caret={tool[0] === 'caret'} aria-label={tool[0]}>{tool[1]}</ToolButton>
        : <ToolSeparator key={i} />)}
    </BarRow>
    <AddressRow $height={23}>
      <Grip $tall $gap={6} />
      <Field $grow>
        <Lock />
        <input placeholder="主机名或IP地址" aria-label="主机名或IP地址" />
        <ToolButton aria-label="历史记录"><Caret /></ToolButton>
      </Field>
      <Field $width={118}><input placeholder="用户名" aria-label="用户名" /></Field>
      <Field $width={125}><input type="password" placeholder="密码" aria-label="密码" /></Field>
    </AddressRow>
    <Panes>
      <FilePane active grow={499} tab="桌面" tabWidth={90} dot="#d4d9dd" path="桌面" icon={<DesktopIcon />} files={localFiles} thumb={94} />
      <FilePane grow={506} tab="Respberry Pi" tabWidth={143} dot="#0cb60c" path="/home/frp" icon={<Folder />} files={remoteFiles} thumb={74} />
    </Panes>
    <Transfers>
      <TransferTabs>
        <TransferTab $active>传输</TransferTab>
        <TransferTab>日志</TransferTab>
      </TransferTabs>
      <TransferTable>
        <thead>
          <tr>
            {transferColumns.map(([label, width]) => <th key={label} style={{ width }}>{label}</th>)}
          </tr>
        </thead>
      </TransferTable>
      <TransferBody />
      <Scroll $height={16}>
        <ScrollButton aria-label="向左"><Chevron dir="left" size={9} weight={2} /></ScrollButton>
        <ScrollTrack><ScrollThumb $size={93} /></ScrollTrack>
        <ScrollButton aria-label="向右"><Chevron dir="right" size={9} weight={2} /></ScrollButton>
      </Scroll>
    </Transfers>
    <StatusBar>
      <StatusItem $width={59}>二进制</StatusItem>
      <StatusItem $width={100}>1已选择</StatusItem>
      <StatusItem $width={101} $end>0 Bytes</StatusItem>
    </StatusBar>
  </XftpWindow>
)

const Explorer = () => (
  <ExplorerWindow>
    <ExplorerTitle>
      <ToolsTab>缩的文件夹工具</ToolsTab>
      <ExplorerName>Compressed</ExplorerName>
      <CaptionButton aria-label="最小化"><Minimize color="#fff" /></CaptionButton>
      <CaptionButton aria-label="最大化"><Maximize color="#fff" /></CaptionButton>
      <CaptionButton $wide aria-label="关闭"><Cross size={10} /></CaptionButton>
    </ExplorerTitle>
    <Ribbon>
      <RibbonTab>解压缩</RibbonTab>
      <RibbonTools>
        <Chevron color="#999" />
        <HelpDot />
      </RibbonTools>
    </Ribbon>
    <Location>
      <Crumbs>
        <Chevron dir="right" size={6} weight={2} />
        <button>下载</button>
        <Chevron dir="right" size={6} weight={2} />
        <button>Compressed</button>
        <CrumbSpacer />
        <Chevron weight={1.8} />
        <Refresh aria-label="刷新"><SmallReload /></Refresh>
      </Crumbs>
      <Search>
        <input placeholder={'搜索"Compressed"'} aria-label="搜索" />
        <Magnifier />
      </Search>
    </Location>
    <ExplorerList>
      <ExplorerTable>
        <colgroup>
          <col />
          <col width="120" />
          <col width="120" />
          <col width="75" />
        </colgroup>
        <thead>
          <tr>
            <th />
            <th><SortHead>修改日期 <Chevron size={8} weight={1} color="#888" /></SortHead></th>
            <th>类型</th>
            <th>大小</th>
          </tr>
        </thead>
        <tbody>
          {archives.map((row, i) => (
            <ExplorerRow key={row[0]} $selected={i === 0}>
              {row.map(cell => <td key={cell}>{cell}</td>)}
            </ExplorerRow>
          ))}
        </tbody>
      </ExplorerTable>
      <VerticalScroll>
        <ScrollButton aria-label="向上"><Chevron dir="up" size={9} weight={2} /></ScrollButton>
        <VerticalThumb />
      </VerticalScroll>
    </ExplorerList>
  </ExplorerWindow>
)

const App = () => {
  return (
    <>
      <GlobalStyle />
      <Desktop>
        <Wallpaper />
        <Xftp />
        <Explorer />
        <Taskbar>
          <Apps>
            <StartButton aria-label="开始"><WindowsLogo /></StartButton>
            <AppGroup>
              <AppButton $active $stack={2} aria-label="文件资源管理器"><Library size={22} /></AppButton>
              <StackEdge $active />
              <StackEdge $active />
            </AppGroup>
            <AppButton aria-label="Chrome"><Chrome /></AppButton>
            <AppGroup>
              <AppButton $stack={1} aria-label="TIM"><StarBubble /></AppButton>
              <StackEdge />
            </AppGroup>
            <AppButton aria-label="Xshell"><Snail size={21} color="#d93a38" light="#f59a94" /></AppButton>
            <AppButton aria-label="Xftp"><XftpLogo size={21} /></AppButton>
            <AppButton aria-label="Word"><WordApp /></AppButton>
          </Apps>
          <Tray>
            <NetSpeed>0.0 kB/s<br />0.0 kB/s</NetSpeed>
            <TrayButton aria-label="显示隐藏的图标">
              <svg width="8" height="4" viewBox="0 0 8 4"><path d="M0 4L4 0L8 4Z" fill="#fff" /></svg>
            </TrayButton>
            <TrayButton aria-label="Telegram"><PaperPlane /></TrayButton>
            <TrayButton aria-label="网络"><Wifi /></TrayButton>
            <TrayButton aria-label="QQ"><Penguin /></TrayButton>
            <TrayButton aria-label="TIM"><StarBubble size={14} /></TrayButton>
            <TrayButton aria-label="音量"><Speaker /></TrayButton>
            <Language>ENG</Language>
            <Clock>17:58<br />2017/12/21</Clock>
            <TrayButton aria-label="通知"><Notification /></TrayButton>
          </Tray>
        </Taskbar>
      </Desktop>
    </>
  );
}

export default App;
